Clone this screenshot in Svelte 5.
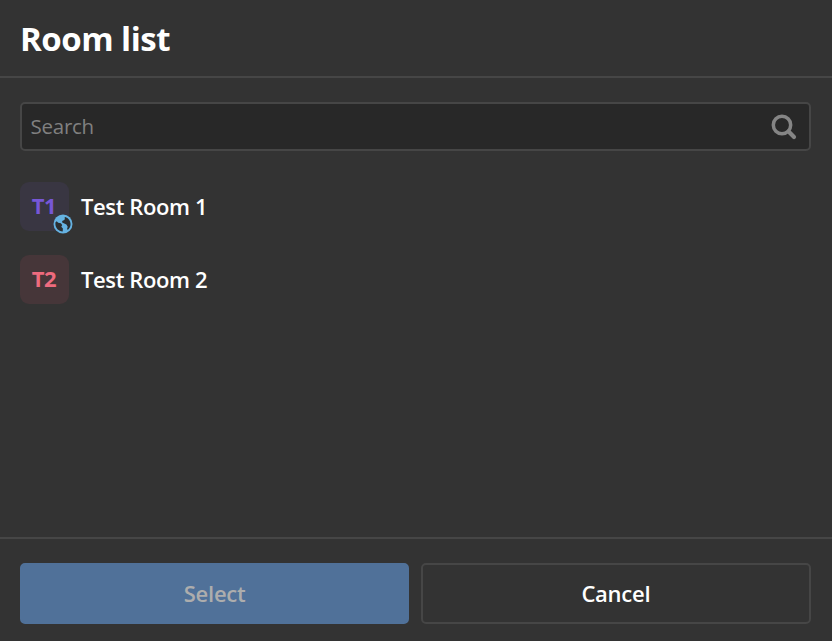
<script>
  const rooms = [
    { initials: 'T1', name: 'Test Room 1', tone: 'violet', open: true },
    { initials: 'T2', name: 'Test Room 2', tone: 'rose', open: false }
  ];
</script>

<div class="panel">
  <header><h1>Room list</h1></header>
  <main>
    <label class="search">
      <input type="text" placeholder="Search" />
      <svg width="26" height="26" viewBox="0 0 26 26" fill="none" stroke="#858585">
        <circle cx="11" cy="11" r="8.7" stroke-width="3.5" />
        <path d="M17.6 17.6L23 23" stroke-width="4.2" stroke-linecap="round" />
      </svg>
    </label>
    <ul>
      {#each rooms as room}
        <li>
          <span class="avatar {room.tone}">
            <span class="initials">{room.initials}</span>
            {#if room.open}
              <svg class="globe" width="20" height="20" viewBox="0 0 20 20">
                <circle cx="10" cy="10" r="9.5" fill="#65b2e2" />
                <path fill="#2b2e31" d="M2.4 8.4L3.7 7.3L5.2 8.7L7.9 9.3L9.2 10.9L8.3 12.7L9.9 14.6L9.7 17.4C5.5 17.3 2.4 14 2.4 10Z M12.2 2.9C15.5 3.8 17.5 6.7 17.6 10C17.6 12.2 16.6 14.4 15 15.7L14 15.2L14.7 12.8L13.4 10.6L11.3 9.4L9.2 8.4L9.2 6.9L11.2 6.1L12.1 4.8L11.3 4Z" />
              </svg>
            {/if}
          </span>
          <span class="name">{room.name}</span>
        </li>
      {/each}
    </ul>
  </main>
  <footer>
    <button class="primary" disabled>Select</button>
    <button>Cancel</button>
  </footer>
</div>

<style>
  :global(body) { background: #333; }
  .panel, .panel * { box-sizing: border-box; }
  .panel {
    height: 641px;
    display: flex;
    flex-direction: column;
    background: #333;
    color: #fff;
    font-family: "Open Sans", "Noto Sans", sans-serif;
  }
  header {
    height: 78px;
    padding: 2px 20px 0;
    border-bottom: 2px solid #464646;
    display: flex;
    align-items: center;
  }
  h1 { margin: 0; font-size: 33px; line-height: 44px; font-weight: 700; letter-spacing: -0.5px; }
  main { flex: 1; padding: 24px 21.5px 0 20px; }
  .search {
    height: 49px;
    display: flex;
    align-items: center;
    padding: 0 11.5px 0 8.5px;
    border: 2px solid #464646;
    border-radius: 5px;
    background: #282828;
  }
  input {
    flex: 1;
    min-width: 0;
    padding: 0 0 2px;
    border: 0;
    outline: 0;
    background: none;
    color: #fff;
    font: 400 20.5px/28px "Open Sans", "Noto Sans", sans-serif;
    letter-spacing: -0.25px;
  }
  input::placeholder { color: #808080; opacity: 1; }
  ul {
    list-style: none;
    margin: 30.5px 0 0;
    padding: 0;
    display: flex;
    flex-direction: column;
    gap: 24px;
  }
  li { display: flex; align-items: center; gap: 12px; height: 49px; }
  .avatar {
    position: relative;
    width: 49px;
    height: 49px;
    padding: 0 1px 2px 0;
    border-radius: 9px;
    display: flex;
    align-items: center;
    justify-content: center;
    font-size: 22px;
    line-height: 30px;
    font-weight: 700;
    letter-spacing: -0.5px;
  }
  .violet { background: #393642; color: #7757d6; }
  .rose { background: #463639; color: #ee6b7e; }
  .globe { position: absolute; right: -3.5px; bottom: -3.5px; }
  .name { padding-bottom: 1px; font-size: 22px; font-weight: 600; line-height: 30px; letter-spacing: -0.38px; }
  footer {
    height: 104px;
    display: flex;
    gap: 12px;
    padding: 24px 21.5px 0 20px;
    border-top: 2px solid #464646;
  }
  button {
    flex: 1;
    height: 61px;
    padding: 0 0 2px;
    border: 2px solid #464646;
    border-radius: 5px;
    background: #333;
    color: #fff;
    font: 600 22px/30px "Open Sans", "Noto Sans", sans-serif;
    letter-spacing: -0.25px;
  }
  .primary { border-color: #507199; background: #507199; color: #adadad; }
</style>
